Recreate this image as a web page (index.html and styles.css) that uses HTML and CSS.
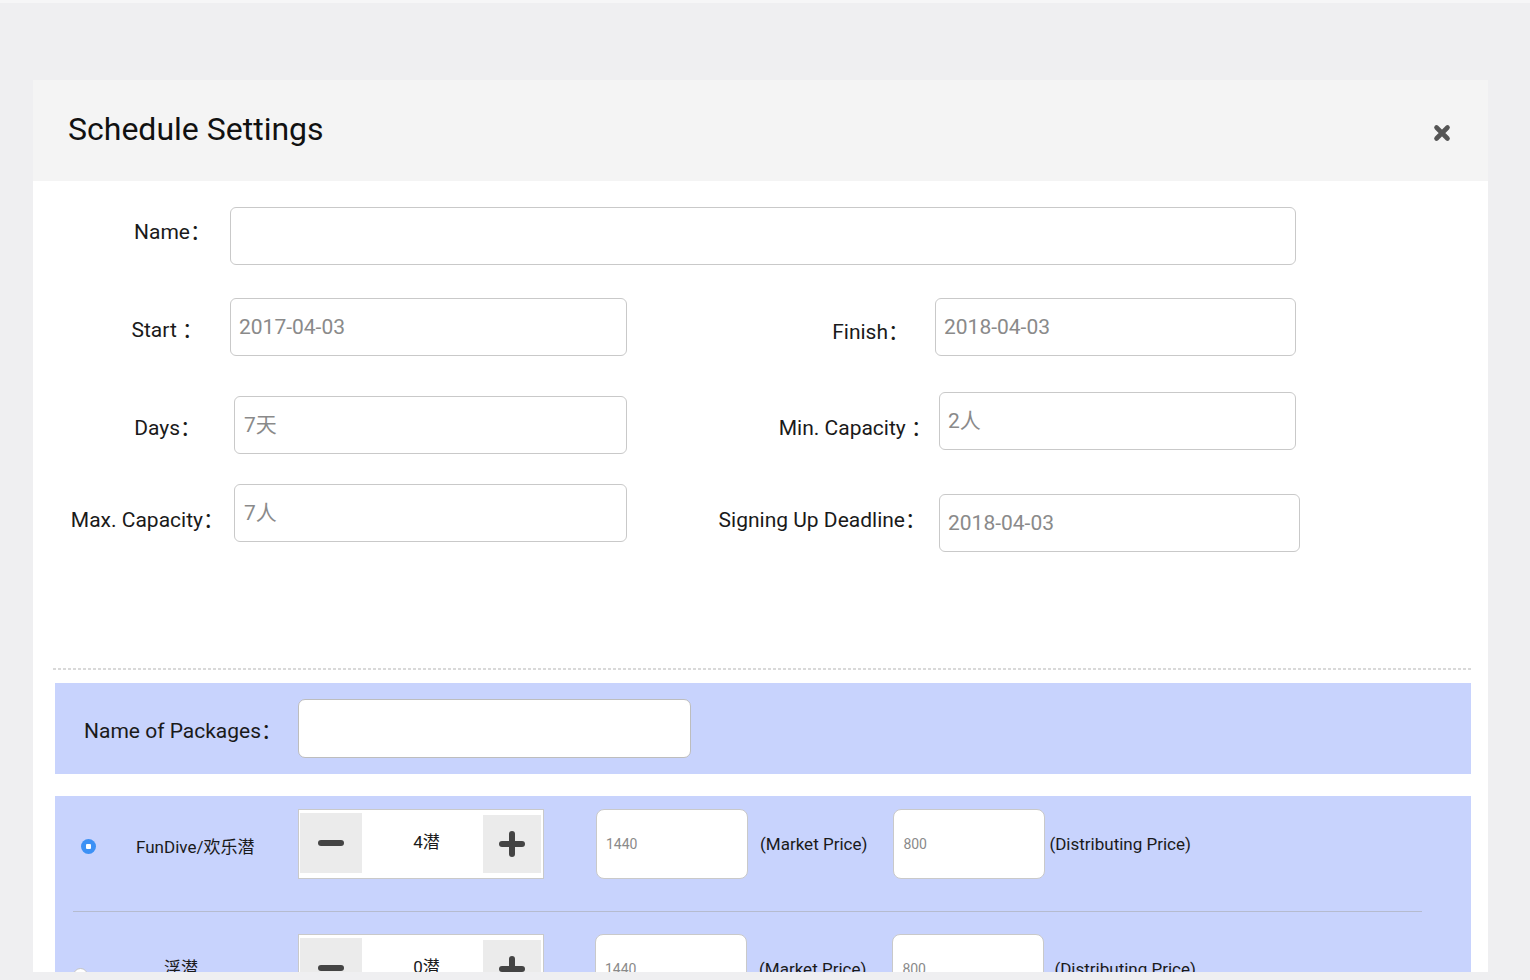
FILE: index.html
```html
<!DOCTYPE html>
<html>
<head>
<meta charset="utf-8">
<link rel="stylesheet" href="styles.css">
</head>
<body>
<div class="page">
  <div class="modal">
    <div class="modal-header">
      <h1 class="modal-title">Schedule Settings</h1>
      <svg class="close" width="18" height="18" viewBox="0 0 18 18"><path d="M3.5 3.5 L14.5 14.5 M14.5 3.5 L3.5 14.5" stroke="#555" stroke-width="4.6" stroke-linecap="round"/></svg>
    </div>
    <div class="modal-body">
      <div class="form-row row-name">
        <div class="field">
          <label class="lbl lbl-name">Name：</label>
          <input class="inp inp-name" type="text">
        </div>
      </div>
      <div class="form-row row-2">
        <div class="field">
          <label class="lbl lbl-start">Start ：</label>
          <input class="inp inp-left inp-start" type="text" placeholder="2017-04-03">
        </div>
        <div class="field">
          <label class="rlbl rlbl-finish">Finish：</label>
          <input class="inp inp-right" type="text" placeholder="2018-04-03">
        </div>
      </div>
      <div class="form-row row-3">
        <div class="field">
          <label class="lbl lbl-days">Days：</label>
          <input class="inp inp-left" type="text" placeholder="7天">
        </div>
        <div class="field">
          <label class="rlbl rlbl-min">Min. Capacity ：</label>
          <input class="inp inp-right inp-min" type="text" placeholder="2人">
        </div>
      </div>
      <div class="form-row row-4">
        <div class="field">
          <label class="lbl lbl-max">Max. Capacity：</label>
          <input class="inp inp-left inp-max" type="text" placeholder="7人">
        </div>
        <div class="field">
          <label class="rlbl rlbl-sign">Signing Up Deadline：</label>
          <input class="inp inp-right inp-sign" type="text" placeholder="2018-04-03">
        </div>
      </div>

      <div class="dash"></div>

      <div class="pkg-name">
        <label class="pkg-name-lbl">Name of Packages：</label>
        <input class="pkg-name-inp" type="text">
      </div>

      <div class="pkg-list">
        <div class="pkg-row pkg-row-1">
          <div class="pkg-label">
            <span class="radio radio-on"></span>
            <span class="pkg-title">FunDive/欢乐潜</span>
          </div>
          <div class="stepper">
            <span class="step-btn step-minus"><svg width="26" height="26" viewBox="0 0 26 26"><rect x="0" y="10" width="26" height="6" rx="3" fill="#444"/></svg></span>
            <span class="step-val">4潜</span>
            <span class="step-btn step-plus"><svg width="26" height="26" viewBox="0 0 26 26"><rect x="0" y="10" width="26" height="6" rx="3" fill="#444"/><rect x="10" y="0" width="6" height="26" rx="3" fill="#444"/></svg></span>
          </div>
          <input class="price" type="text" placeholder="1440">
          <span class="price-lbl price-lbl-market">(Market Price)</span>
          <input class="price" type="text" placeholder="800">
          <span class="price-lbl price-lbl-dist">(Distributing Price)</span>
        </div>
        <div class="pkg-row pkg-row-2">
          <div class="pkg-label">
            <span class="radio radio-off"></span>
            <span class="pkg-title">浮潜</span>
          </div>
          <div class="stepper">
            <span class="step-btn step-minus"><svg width="26" height="26" viewBox="0 0 26 26"><rect x="0" y="10" width="26" height="6" rx="3" fill="#444"/></svg></span>
            <span class="step-val">0潜</span>
            <span class="step-btn step-plus"><svg width="26" height="26" viewBox="0 0 26 26"><rect x="0" y="10" width="26" height="6" rx="3" fill="#444"/><rect x="10" y="0" width="6" height="26" rx="3" fill="#444"/></svg></span>
          </div>
          <input class="price price-2" type="text" placeholder="1440">
          <span class="price-lbl price-lbl-market">(Market Price)</span>
          <input class="price" type="text" placeholder="800">
          <span class="price-lbl price-lbl-dist2">(Distributing Price)</span>
        </div>
      </div>
    </div>
  </div>
</div>
</body>
</html>
```

FILE: styles.css
```css
html, body {
  margin: 0;
  padding: 0;
  background: #efeff1;
  font-family: Roboto, "Noto Sans CJK SC", sans-serif;
  color: #1a1a1a;
}

.page {
  box-sizing: border-box;
  height: 972px;
  overflow: hidden;
  padding: 77px 42px 0 33px;
  border-top: 3px solid #f6f6f7;
}

.modal {
  background: #fff;
  min-height: 1200px;
}

.modal-header {
  height: 101px;
  background: #f4f4f4;
  display: flex;
  align-items: center;
  justify-content: space-between;
  padding: 0 37px 0 35px;
}

.modal-title {
  margin: -4px 0 0 0;
  font-size: 32px;
  font-weight: 400;
  color: #111;
}

.close {
  margin-top: 4px;
}

.modal-body {
  padding-top: 26px;
}

/* form rows */
.form-row {
  display: flex;
  justify-content: space-between;
  align-items: center;
  height: 58px;
  padding-right: 192px;
}

.row-2 { margin-top: 33px; }
.row-3 { margin-top: 40px; }
.row-4 { margin-top: 30px; }

.field {
  display: flex;
  align-items: center;
  height: 58px;
}

.lbl, .rlbl {
  font-size: 21px;
  color: #1a1a1a;
  white-space: nowrap;
}

.lbl {
  text-align: right;
  box-sizing: border-box;
}

.lbl-name { width: 178px; margin-right: 19px; margin-top: -12px; }
.lbl-start { width: 170px; margin-right: 27px; margin-top: 2px; }
.lbl-days { width: 168px; margin-right: 33px; margin-top: 2px; }
.lbl-max { width: 191px; margin-right: 10px; margin-top: 10px; }

.rlbl-finish { margin-right: 26px; margin-top: 6px; }
.rlbl-min { margin-right: 7px; margin-top: 2px; }
.rlbl-sign { margin-right: 13px; margin-top: 10px; }

.inp {
  box-sizing: border-box;
  height: 58px;
  border: 1px solid #c9c9c9;
  border-radius: 6px;
  background: #fff;
  font-family: Roboto, "Noto Sans CJK SC", sans-serif;
  font-size: 21px;
  color: #333;
  padding: 0 8px;
  outline: none;
}

.inp::placeholder {
  color: #8a8a8a;
  opacity: 1;
}

.inp-name { width: 1066px; }
.inp-left { width: 393px; padding-left: 9px; }
.inp-start { width: 397px; padding-left: 8px; }
.inp-right { width: 361px; }
.inp-min { width: 357px; margin-top: -8px; }
.inp-sign { width: 361px; margin-top: 20px; margin-right: -4px; }
.inp-max { padding-left: 9px; }

.dash {
  margin: 126px 17px 0 20px;
  height: 2px;
  background: repeating-linear-gradient(90deg, #d9d9d9 0 3px, transparent 3px 5px);
}

/* packages */
.pkg-name {
  margin: 13px 17px 0 22px;
  height: 91px;
  background: #c8d3fd;
  display: flex;
  align-items: center;
  padding-left: 29px;
}

.pkg-name-lbl {
  font-size: 21px;
  color: #1a1a1a;
  width: 199px;
  margin-right: 15px;
  white-space: nowrap;
}

.pkg-name-inp {
  box-sizing: border-box;
  width: 393px;
  height: 59px;
  border: 1px solid #bdbdbd;
  border-radius: 7px;
  background: #fff;
  outline: none;
}

.pkg-list {
  margin: 22px 17px 0 22px;
  background: #c8d3fd;
  padding-bottom: 40px;
}

.pkg-row {
  display: flex;
  align-items: center;
  margin: 0 49px 0 18px;
}

.pkg-row-1 {
  padding: 13px 0 32px;
  border-bottom: 1px solid #b5bbcf;
}

.pkg-row-2 {
  padding: 22px 0 30px;
}

.pkg-label {
  width: 225px;
  display: flex;
  align-items: center;
  box-sizing: border-box;
}

.pkg-row-1 .pkg-label { padding-left: 8px; }
.pkg-row-1 .pkg-title { margin-left: 40px; margin-top: 2px; }
.pkg-row-2 .pkg-title { margin-left: 76px; margin-top: -6px; }

.pkg-title {
  font-size: 17px;
  color: #1a1a1a;
  white-space: nowrap;
}

.radio {
  width: 15px;
  height: 15px;
  border-radius: 50%;
  box-sizing: border-box;
  flex: none;
  position: relative;
}

.radio-on {
  background: #3d91f5;
  margin-top: 4px;
}

.radio-on::after {
  content: "";
  position: absolute;
  left: 5px;
  top: 5px;
  width: 5px;
  height: 5px;
  background: #fff;
  border-radius: 1px;
}

.radio-off {
  background: #fff;
  border: 1px solid #c4c4c4;
  margin-top: 12px;
}

.stepper {
  box-sizing: border-box;
  width: 246px;
  height: 70px;
  border: 1px solid #c9c9c9;
  background: #fff;
  display: flex;
  align-items: flex-start;
  padding: 3px 2px 5px 1px;
  flex: none;
}

.step-btn {
  background: #ebebeb;
  display: flex;
  align-items: center;
  justify-content: center;
}

.step-minus { width: 62px; height: 60px; }
.step-plus { width: 58px; height: 58px; margin-top: 2px; }

.step-val {
  flex: 1;
  text-align: center;
  font-size: 17px;
  line-height: 58px;
  color: #1a1a1a;
  padding-left: 8px;
}

.price {
  box-sizing: border-box;
  width: 152px;
  height: 70px;
  border: 1px solid #c9c9c9;
  border-radius: 8px;
  background: #fff;
  font-family: Roboto, sans-serif;
  font-size: 14px;
  padding: 0 9px;
  margin-left: 52px;
  outline: none;
  flex: none;
}

.price + .price-lbl { margin-left: 12px; }

.price::placeholder {
  color: #8a8a8a;
  opacity: 1;
}

.price-lbl {
  font-size: 17px;
  color: #1a1a1a;
  white-space: nowrap;
}

.price-lbl-market + .price { margin-left: 26px; }
.price-lbl-dist { margin-left: 4px !important; }
.price-lbl-dist2 { margin-left: 10px !important; }
.price-2 { margin-left: 51px; }
```
